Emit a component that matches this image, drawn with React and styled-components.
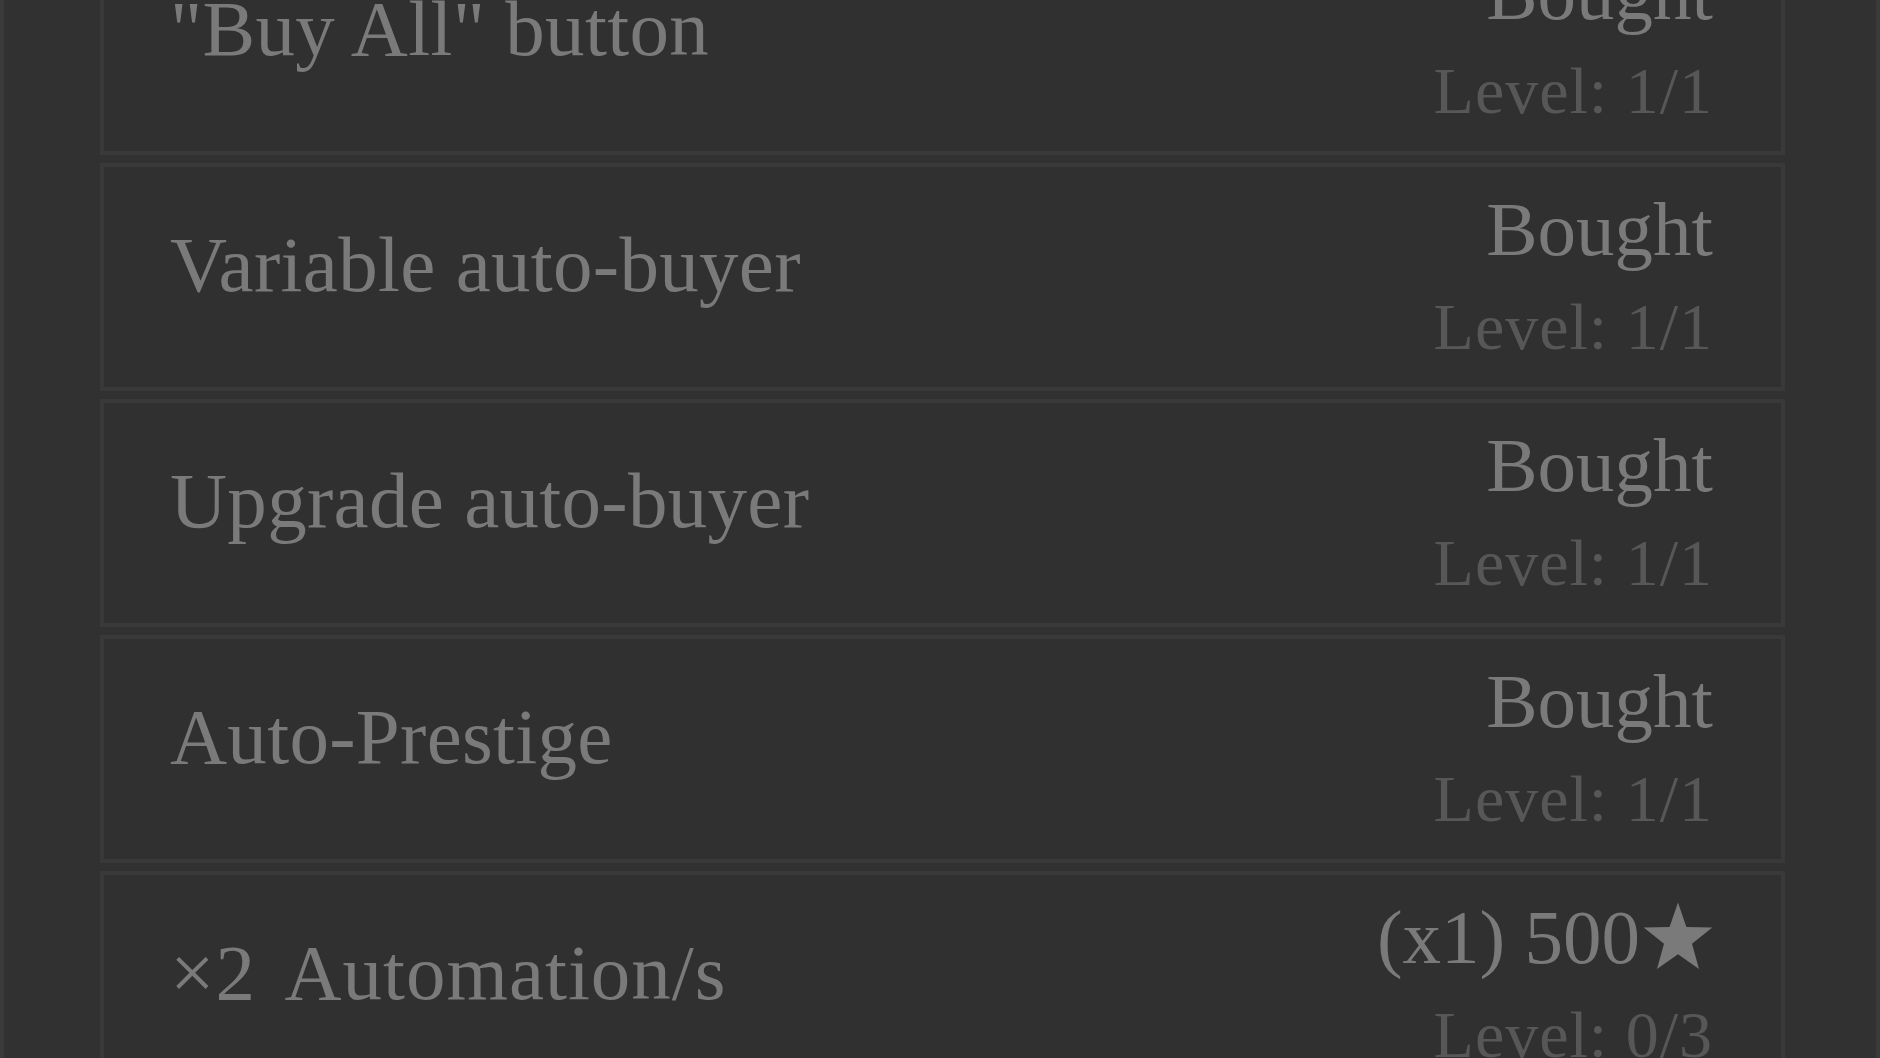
import * as React from "react";
import styled, { createGlobalStyle } from "styled-components";

const GlobalStyle = createGlobalStyle`
  html, body {
    margin: 0;
    padding: 0;
    background: #313131;
    overflow: hidden;
  }
`;

const upgrades = [
  { name: "\"Buy All\" button", bought: true, level: "1/1" },
  { name: "Variable auto-buyer", bought: true, level: "1/1" },
  { name: "Upgrade auto-buyer", bought: true, level: "1/1" },
  { name: "Auto-Prestige", bought: true, level: "1/1" },
  { name: "\u00d72 Automation/s", bought: false, price: "(x1) 500", level: "0/3" },
];

const Page = styled.div`
  height: 100vh;
  box-sizing: border-box;
  border-left: 4px solid #3a3a3a;
  border-right: 4px solid #3a3a3a;
  padding: 0 91px 0 96px;
  overflow: hidden;
  font-family: "Liberation Serif", "DejaVu Serif", serif;
`;

const List = styled.div`
  display: flex;
  flex-direction: column;
  gap: 8px;
  margin-top: -73px;
`;

const Card = styled.div`
  box-sizing: border-box;
  height: 228px;
  border: 4px solid #393939;
  background: #303030;
  display: flex;
  align-items: center;
  justify-content: space-between;
  padding: 14px 68px 18px 66px;
`;

const Title = styled.div`
  font-size: 79px;
  line-height: 95px;
  color: #7a7a7a;
  white-space: nowrap;
  margin-bottom: 22px;
  word-spacing: ${ (p) => (p.$wide ? "12px" : "0") };
  letter-spacing: ${ (p) => (p.$wide ? "1px" : "0.3px") };
`;

const Side = styled.div`
  display: flex;
  flex-direction: column;
  align-items: flex-end;
  align-self: flex-start;
`;

const Status = styled.div`
  font-size: 77px;
  line-height: 96px;
  color: #7a7a7a;
  white-space: nowrap;
`;

const Level = styled.div`
  font-size: 66px;
  line-height: 80px;
  margin-top: 10px;
  color: #575757;
  white-space: nowrap;
  letter-spacing: 1px;
`;

const Star = styled.svg`
  width: 70px;
  height: 70px;
  margin-left: 3px;
  vertical-align: -8px;
  fill: #7a7a7a;
`;

const StarIcon = () => (
  <Star viewBox="0 0 100 100">
    <polygon points="50,2 62,37 99,38 70,61 80,97 50,76 20,97 30,61 1,38 38,37" />
  </Star>
);

export default function App() {
  return (
    <>
      <GlobalStyle />
      <Page>
        <List>
          { upgrades.map((item, index) => (
            <Card key={ index }>
              <Title $wide={ !item.bought }>{ item.name }</Title>
              <Side>
                <Status>
                  { item.bought ? "Bought" : (
                    <>
                      { item.price }
                      <StarIcon />
                    </>
                  ) }
                </Status>
                <Level>Level: { item.level }</Level>
              </Side>
            </Card>
          )) }
        </List>
      </Page>
    </>
  );
}
